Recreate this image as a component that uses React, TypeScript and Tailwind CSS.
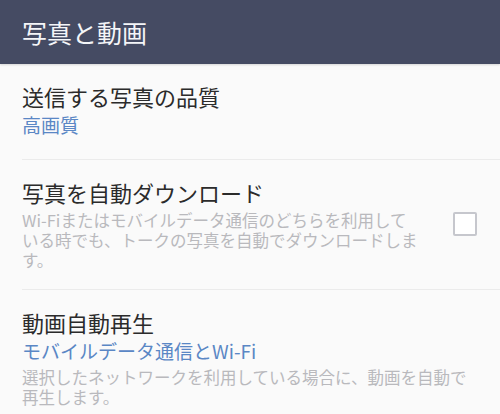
import React from "react";

const font = { fontFamily: '"Noto Sans CJK JP", "Noto Sans", sans-serif' };

export default function App() {
  return (
    <div className="w-[500px] h-[414px] overflow-hidden bg-[#fafafa]" style={font}>
      <div className="h-[64px] bg-[#454b63] flex items-center pl-[22px] shadow-[0_1px_2px_rgba(0,0,0,0.15)] relative">
        <span className="text-[25px] leading-[30px] text-[#f4f5f8]">写真と動画</span>
      </div>

      <div className="ml-[22px] border-b border-[#ebebeb] pt-[18px] pb-[22px] pr-[22px]">
        <div className="text-[22px] leading-[28px] text-[#2b2b2b]">送信する写真の品質</div>
        <div className="mt-[3px] text-[19px] leading-[24px] text-[#5a87c5]">高画質</div>
      </div>

      <div className="ml-[22px] border-b border-[#ebebeb] pt-[18px] pb-[19px] pr-[23px] flex items-center">
        <div className="w-[398px]">
          <div className="text-[22px] leading-[28px] text-[#2b2b2b]">写真を自動ダウンロード</div>
          <div className="mt-[4px] text-[16.5px] leading-[20px] text-[#b9b9bd]">
            Wi-Fiまたはモバイルデータ通信のどちらを利用している時でも、トークの写真を自動でダウンロードします。
          </div>
        </div>
        <div className="ml-auto w-[24px] h-[24px] border-2 border-[#c6c7cd] rounded-[2px] bg-white" />
      </div>

      <div className="ml-[22px] pt-[18px] pr-[22px]">
        <div className="text-[22px] leading-[28px] text-[#2b2b2b]">動画自動再生</div>
        <div className="mt-[3px] text-[19px] leading-[24px] text-[#5a87c5]">モバイルデータ通信とWi-Fi</div>
        <div className="mt-[4px] text-[16.5px] leading-[20px] text-[#b9b9bd]">
          選択したネットワークを利用している場合に、動画を自動で再生します。
        </div>
      </div>
    </div>
  );
}
